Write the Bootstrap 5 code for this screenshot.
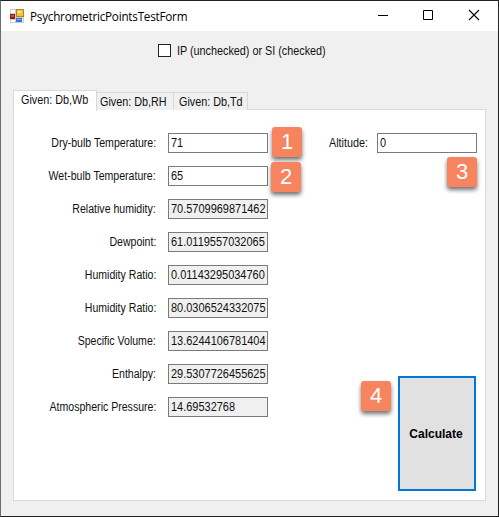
<!DOCTYPE html>
<html lang="en">
<head>
<meta charset="utf-8">
<title>PsychrometricPointsTestForm</title>
<link href="https://cdn.jsdelivr.net/npm/bootstrap@5.3.0/dist/css/bootstrap.min.css" rel="stylesheet">
<style>
body{margin:0;overflow:hidden;font:12px/14px "Liberation Sans",Arial,sans-serif;color:#111}
.win{width:499px;height:517px;background:#f0f0f0;border:1px solid #222;border-left-color:#6c6c6c}
.titlebar{height:30px;padding-left:9px}
.caption{font:11.7px/16px "Open Sans","Noto Sans",sans-serif;letter-spacing:-.22px;color:#000;margin-left:6px}
.sys{width:46px;height:30px}
.t{display:inline-block;white-space:nowrap;transform:scaleX(.9);transform-origin:left center}
.box .t{transform:scaleX(.914)}
.unitrow{height:58px;padding:13px 0 0 157px}
.unitrow .form-check-input{width:13px;height:13px;border:1px solid #222;border-radius:0;margin:0;background:#fff}
.unitrow label{margin-left:6px}
.tabs{height:21px;padding-left:12px}
.tabs .nav-link{height:18px;padding:2px 0 0 3px;border:1px solid #d9d9d9;border-left:0;border-bottom:0;border-radius:0;color:#111;background:#f0f0f0;line-height:14px;white-space:nowrap}
.tabs .nav-link.active{width:84px;height:21px;padding:2px 0 0 7px;border-left:1px solid #d9d9d9;background:#fff;margin-bottom:-1px;z-index:1;position:relative}
.tabs .tab-b{width:77px}
.tabs .tab-c{width:74px;padding-left:5px}
.pane{width:473px;height:392px;margin:-1px 0 0 12px;border:1px solid #dadada;background:#fff;padding:23px 8px 0 14px}
.fields{width:240px;gap:13px}
.fields label,.alt label{line-height:14px}
.fields label{width:128px;margin-right:12px;text-align:right}
.fields label .t{transform:scaleX(.88);transform-origin:right center}
.box{width:100px;height:20px;border:1px solid #7a7a7a;background:#fff;padding:2px 0 0 2px;overflow:hidden;line-height:14px}
.box.ro{background:#f0f0f0}
.right{width:148px;height:358px}
.callout-num{position:absolute;width:30px;height:30px;border-radius:3px;background:#f5845f;color:#fff;font-size:22px;line-height:30px;text-align:center;box-shadow:0 3px 4px rgba(0,0,0,.55)}
.n1{left:272px;top:127px}.n2{left:271px;top:162px}.n3{left:447px;top:157px}.n4{left:361px;top:381px}
.calc{width:78px;height:115px;border:2px solid #0078d7;border-radius:0;background:#e1e1e1;color:#000;font-size:12px;font-weight:700;padding:0 2px 0 0;margin-right:1px}
.calc:hover{background:#e1e1e1}
</style>
<script src="https://cdn.jsdelivr.net/npm/bootstrap@5.3.0/dist/js/bootstrap.bundle.min.js"></script>
</head>
<body>
<main class="win position-relative">
  <header class="titlebar bg-white d-flex align-items-center">
    <svg width="14" height="14" viewBox="0 0 14 14"><path fill="#c9ccd2" d="M0 0h14v14H0z"/><path fill="#fff" d="M1 1h4v3H1zM1 11h4v2H1zM12 10h1v3h-1z"/><path fill="#b98612" d="M6 0h8v8H6z"/><path fill="#f5c344" d="M7 1h6v6H7z"/><path fill="#ffe79b" d="M8 2h3v2H8z"/><path fill="#8f1d17" d="M0 5h5v5H0z"/><path fill="#cf5142" d="M1 6h3v2H1z"/><path fill="#3f74cc" d="M6 9h6v4H6z"/><path fill="#80aaf0" d="M7 10h4v1H7z"/></svg>
    <span class="caption">PsychrometricPointsTestForm</span>
    <div class="ms-auto d-flex">
      <svg class="sys" viewBox="0 0 46 30"><path d="M18 14.500h10" stroke="#000"/></svg>
      <svg class="sys" viewBox="0 0 46 30"><path d="M17.500 9.500h9v9h-9z" fill="none" stroke="#000"/></svg>
      <svg class="sys" viewBox="0 0 46 30"><path d="M17 9l10 10M27 9L17 19" stroke="#000" stroke-width="1.1"/></svg>
    </div>
  </header>
  <div class="unitrow d-flex align-items-start">
    <input class="form-check-input" type="checkbox" id="unit">
    <label for="unit"><span class="t">IP (unchecked) or SI (checked)</span></label>
  </div>
  <nav class="tabs nav d-flex align-items-end">
    <a class="nav-link active"><span class="t">Given: Db,Wb</span></a>
    <a class="nav-link tab-b"><span class="t">Given: Db,RH</span></a>
    <a class="nav-link tab-c"><span class="t">Given: Db,Td</span></a>
  </nav>
  <section class="pane d-flex justify-content-between">
    <div class="fields d-flex flex-column">
      <div class="d-flex align-items-center"><label><span class="t">Dry-bulb Temperature:</span></label><div class="box"><span class="t">71</span></div></div>
      <div class="d-flex align-items-center"><label><span class="t">Wet-bulb Temperature:</span></label><div class="box"><span class="t">65</span></div></div>
      <div class="d-flex align-items-center"><label><span class="t">Relative humidity:</span></label><div class="box ro"><span class="t">70.5709969871462</span></div></div>
      <div class="d-flex align-items-center"><label><span class="t">Dewpoint:</span></label><div class="box ro"><span class="t">61.0119557032065</span></div></div>
      <div class="d-flex align-items-center"><label><span class="t">Humidity Ratio:</span></label><div class="box ro"><span class="t">0.01143295034760</span></div></div>
      <div class="d-flex align-items-center"><label><span class="t">Humidity Ratio:</span></label><div class="box ro"><span class="t">80.0306524332075</span></div></div>
      <div class="d-flex align-items-center"><label><span class="t">Specific Volume:</span></label><div class="box ro"><span class="t">13.6244106781404</span></div></div>
      <div class="d-flex align-items-center"><label><span class="t">Enthalpy:</span></label><div class="box ro"><span class="t">29.5307726455625</span></div></div>
      <div class="d-flex align-items-center"><label><span class="t">Atmospheric Pressure:</span></label><div class="box ro"><span class="t">14.69532768</span></div></div>
    </div>
    <div class="right d-flex flex-column justify-content-between align-items-end">
      <div class="alt d-flex align-items-center justify-content-between w-100"><label><span class="t">Altitude:</span></label><div class="box"><span class="t">0</span></div></div>
      <button class="btn calc" type="button">Calculate</button>
    </div>
  </section>
</main>
<span class="callout-num n1">1</span>
<span class="callout-num n2">2</span>
<span class="callout-num n3">3</span>
<span class="callout-num n4">4</span>
</body>
</html>
